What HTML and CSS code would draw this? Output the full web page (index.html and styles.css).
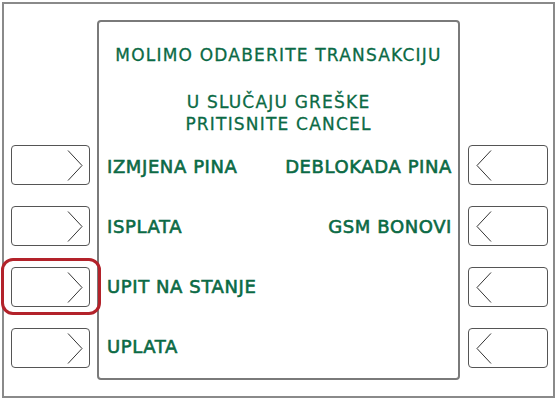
FILE: index.html
```html
<!DOCTYPE html>
<html lang="hr">
<head>
    <meta charset="UTF-8">
    <meta name="viewport" content="width=device-width, initial-scale=1.0">
    <title>Bankomat - odabir transakcije</title>
    <link rel="stylesheet" href="styles.css">
</head>
<body>
    <div class="atm">
        <div class="keys keys-left">
            <div class="key">
                <svg class="chevron" width="16" height="31" viewBox="0 0 16 31"><polyline points="1,0.5 15,15.5 1,30.5"/></svg>
            </div>
            <div class="key">
                <svg class="chevron" width="16" height="31" viewBox="0 0 16 31"><polyline points="1,0.5 15,15.5 1,30.5"/></svg>
            </div>
            <div class="key selected">
                <svg class="chevron" width="16" height="31" viewBox="0 0 16 31"><polyline points="1,0.5 15,15.5 1,30.5"/></svg>
            </div>
            <div class="key">
                <svg class="chevron" width="16" height="31" viewBox="0 0 16 31"><polyline points="1,0.5 15,15.5 1,30.5"/></svg>
            </div>
        </div>

        <div class="screen">
            <p class="title">MOLIMO ODABERITE TRANSAKCIJU</p>
            <p class="notice">U SLUČAJU GREŠKE<br>PRITISNITE CANCEL</p>
            <div class="menu">
                <span class="opt">IZMJENA PINA</span>
                <span class="opt opt-right">DEBLOKADA PINA</span>
                <span class="opt">ISPLATA</span>
                <span class="opt opt-right">GSM BONOVI</span>
                <span class="opt">UPIT NA STANJE</span>
                <span class="opt opt-right"></span>
                <span class="opt">UPLATA</span>
                <span class="opt opt-right"></span>
            </div>
        </div>

        <div class="keys keys-right">
            <div class="key">
                <svg class="chevron" width="16" height="31" viewBox="0 0 16 31"><polyline points="15,0.5 1,15.5 15,30.5"/></svg>
            </div>
            <div class="key">
                <svg class="chevron" width="16" height="31" viewBox="0 0 16 31"><polyline points="15,0.5 1,15.5 15,30.5"/></svg>
            </div>
            <div class="key">
                <svg class="chevron" width="16" height="31" viewBox="0 0 16 31"><polyline points="15,0.5 1,15.5 15,30.5"/></svg>
            </div>
            <div class="key">
                <svg class="chevron" width="16" height="31" viewBox="0 0 16 31"><polyline points="15,0.5 1,15.5 15,30.5"/></svg>
            </div>
        </div>
    </div>
</body>
</html>
```

FILE: styles.css
```css
body {
    margin: 0;
    background: white;
    font-family: "DejaVu Sans", Verdana, sans-serif;
    color: #0b6a45;
}
.atm {
    margin: 2px;
    width: 542px;
    height: 376px;
    border: 2px solid #8a8a8a;
    display: flex;
    align-items: flex-start;
    padding-top: 16px;
    padding-left: 7px;
}
.keys {
    display: flex;
    flex-direction: column;
    gap: 21px;
    margin-top: 125px;
}
.keys-left {
    width: 79px;
    margin-right: 7px;
}
.keys-right {
    width: 80px;
    margin-left: 8px;
}
.key {
    position: relative;
    height: 40px;
    box-sizing: border-box;
    border: 1px solid #555;
    border-radius: 4px;
    background: white;
    display: flex;
    align-items: center;
}
.keys-left .key {
    justify-content: flex-end;
    padding-right: 6px;
}
.keys-right .key {
    justify-content: flex-start;
    padding-left: 7px;
}
.chevron polyline {
    fill: none;
    stroke: #333;
    stroke-width: 1;
}
.selected::after {
    content: "";
    position: absolute;
    left: -11px;
    right: -12px;
    top: -10px;
    bottom: -9px;
    border: 3px solid #b3222a;
    border-radius: 12px;
}
.screen {
    width: 363px;
    height: 360px;
    box-sizing: border-box;
    border: 2px solid #7a7a7a;
    border-radius: 4px;
    text-align: center;
}
.title,
.notice {
    font-size: 17px;
    line-height: 22px;
    letter-spacing: 1.2px;
    -webkit-text-stroke: 0.3px #0b6a45;
}
.title {
    margin: 22px 0 0;
}
.notice {
    margin: 25px 0 0;
}
.menu {
    margin-top: 1px;
    display: grid;
    grid-template-columns: 1fr 1fr;
    grid-template-rows: repeat(4, 60px);
    align-items: center;
}
.opt {
    font-size: 18px;
    letter-spacing: 0.6px;
    -webkit-text-stroke: 0.6px #0b6a45;
    text-align: left;
    padding-left: 8px;
    white-space: nowrap;
}
.opt-right {
    text-align: right;
    padding-left: 0;
    padding-right: 6px;
}
```
